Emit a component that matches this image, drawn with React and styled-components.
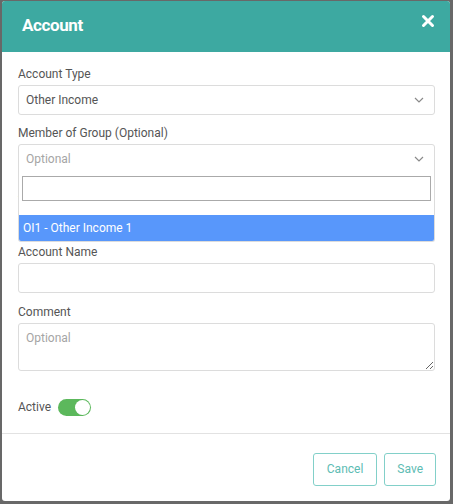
import React from "react";
import styled, { createGlobalStyle } from "styled-components";

const colors = {
	teal: "#3da9a1",
	tealLight: "#82d0c9",
	tealText: "#5dbcb3",
	label: "#555",
	text: "#555",
	placeholder: "#a5a5a5",
	border: "#dcdcdc",
	highlight: "#5897fb",
	green: "#5cb85c"
};

const GlobalStyle = createGlobalStyle`
	html, body {
		margin: 0;
		padding: 0;
		background: #686868;
		font-family: Roboto, "Liberation Sans", Arial, sans-serif;
	}
	* {
		box-sizing: border-box;
	}
`;

const Dialog = styled.div`
	width: 448px;
	height: 500px;
	margin: 1px 0 0 2px;
	background: #fff;
	border-radius: 3px;
	overflow: hidden;
	display: flex;
	flex-direction: column;
`;

const Header = styled.header`
	height: 51px;
	background: ${colors.teal};
	display: flex;
	align-items: center;
	justify-content: space-between;
	padding: 0 15px 6px 20px;
`;

const Title = styled.h1`
	margin: 0;
	font-size: 17px;
	font-weight: 700;
	letter-spacing: -0.4px;
	color: #fff;
	padding-top: 4px;
`;

const CloseButton = styled.button`
	border: 0;
	background: none;
	padding: 0;
	width: 14px;
	height: 14px;
	margin-top: -5px;
	display: flex;
	cursor: pointer;
`;

const Body = styled.div`
	flex: 1;
	padding: 14px 15px 17px 16px;
	border-bottom: 1px solid #e2e2e2;
`;

const Group = styled.div`
	position: relative;
	margin-bottom: 10.5px;
`;

const Label = styled.label`
	display: block;
	font-size: 12px;
	line-height: 17px;
	color: ${colors.label};
	margin-bottom: 2px;
`;

const SelectBox = styled.div`
	height: 30px;
	border: 1px solid ${colors.border};
	border-radius: ${(p) => (p.open ? "3px 3px 0 0" : "3px")};
	display: flex;
	align-items: center;
	justify-content: space-between;
	padding: 0 10px 0 7px;
	font-size: 12px;
	color: ${(p) => (p.placeholder ? colors.placeholder : colors.text)};
`;

const TextInput = styled.input`
	display: block;
	width: 100%;
	height: 30px;
	border: 1px solid ${colors.border};
	border-radius: 3px;
	padding: 0 7px;
	font: inherit;
	font-size: 12px;
	color: ${colors.text};
`;

const TextArea = styled.textarea`
	display: block;
	width: 100%;
	height: 48px;
	border: 1px solid ${colors.border};
	border-radius: 3px;
	padding: 7px 7px;
	font: inherit;
	font-size: 12px;
	color: ${colors.text};
	resize: vertical;

	&::placeholder {
		color: ${colors.placeholder};
	}
`;

const Dropdown = styled.div`
	position: absolute;
	left: 0;
	right: 0;
	top: 47px;
	background: #fff;
	border: 1px solid ${colors.border};
	border-top: 0;
	border-radius: 0 0 3px 3px;
	overflow: hidden;
	z-index: 2;
`;

const SearchWrap = styled.div`
	padding: 4px 3px 14px 3px;
`;

const SearchField = styled.input`
	display: block;
	width: 100%;
	height: 25px;
	border: 1px solid #aaa;
	padding: 0 4px;
	font: inherit;
	font-size: 12px;
	outline: none;
`;

const Option = styled.div`
	height: 26px;
	line-height: 26px;
	padding: 0 4px;
	font-size: 12px;
	color: ${(p) => (p.active ? "#fff" : colors.text)};
	background: ${(p) => (p.active ? colors.highlight : "transparent")};
`;

const ActiveRow = styled.div`
	display: flex;
	align-items: center;
	gap: 7px;
	margin-top: 28px;
	font-size: 12px;
	color: ${colors.label};
`;

const Toggle = styled.span`
	width: 33px;
	height: 17px;
	border-radius: 9px;
	background: ${(p) => (p.on ? colors.green : "#ccc")};
	display: flex;
	align-items: center;
	justify-content: ${(p) => (p.on ? "flex-end" : "flex-start")};
	padding: 1px;
`;

const Knob = styled.span`
	width: 15px;
	height: 15px;
	border-radius: 50%;
	background: #fff;
`;

const Footer = styled.footer`
	height: 68px;
	display: flex;
	justify-content: flex-end;
	align-items: flex-start;
	gap: 7px;
	padding: 19px 14px 0 0;
`;

const Button = styled.button`
	height: 33px;
	padding: 0 ${(p) => p.pad || 13}px;
	background: #fff;
	border: 1px solid ${colors.tealLight};
	border-radius: 3px;
	font: inherit;
	font-size: 12px;
	color: ${colors.tealText};
	cursor: pointer;
`;

const Chevron = () => (
	<svg width="10" height="6" viewBox="0 0 10 6" fill="none">
		<path d="M1 1l4 4 4-4" stroke="#8a8a8a" strokeWidth="1.2" />
	</svg>
);

const CloseIcon = () => (
	<svg width="14" height="14" viewBox="0 0 14 14">
		<path d="M2.5 2.5l9 9M11.5 2.5l-9 9" stroke="#fff" strokeWidth="3" strokeLinecap="round" />
	</svg>
);

const App = () => (
	<>
		<GlobalStyle />
		<Dialog>
			<Header>
				<Title>Account</Title>
				<CloseButton aria-label="Close">
					<CloseIcon />
				</CloseButton>
			</Header>

			<Body>
				<Group>
					<Label>Account Type</Label>
					<SelectBox>
						Other Income
						<Chevron />
					</SelectBox>
				</Group>

				<Group>
					<Label>Member of Group (Optional)</Label>
					<SelectBox open placeholder>
						Optional
						<Chevron />
					</SelectBox>
					<Dropdown>
						<SearchWrap>
							<SearchField />
						</SearchWrap>
						<Option active>OI1 - Other Income 1</Option>
					</Dropdown>
				</Group>

				<Group>
					<Label>Account Code</Label>
					<TextInput />
				</Group>

				<Group>
					<Label>Account Name</Label>
					<TextInput />
				</Group>

				<Group>
					<Label>Comment</Label>
					<TextArea placeholder="Optional" />
				</Group>

				<ActiveRow>
					Active
					<Toggle on>
						<Knob />
					</Toggle>
				</ActiveRow>
			</Body>

			<Footer>
				<Button>Cancel</Button>
				<Button pad={12}>Save</Button>
			</Footer>
		</Dialog>
	</>
);

export default App;
